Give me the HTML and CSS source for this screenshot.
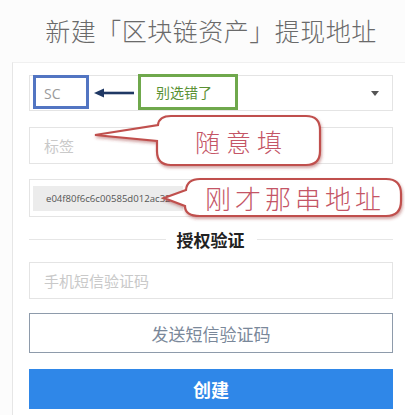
FILE: index.html
```html
<!DOCTYPE html>
<html lang="zh-CN">
<head>
<meta charset="utf-8">
<title>新建提现地址</title>
<link rel="stylesheet" href="styles.css">
</head>
<body>
<div class="page">
  <h1 class="title">新建「区块链资产」提现地址</h1>
  <div class="card">
    <div class="field select">
      <span class="select-value">SC</span>
      <span class="caret"></span>
    </div>
    <div class="field field-label"><span class="ph">标签</span></div>
    <div class="field addr"><span class="addr-chip">e04f80f6c6c00585d012ac32</span></div>
    <div class="divider"><span class="divider-text">授权验证</span></div>
    <div class="field field-sms"><span class="ph">手机短信验证码</span></div>
    <button class="btn-outline">发送短信验证码</button>
    <button class="btn-primary">创建</button>
  </div>

  <div class="mark-blue"></div>
  <svg class="arrow" width="42" height="12" viewBox="0 0 42 12">
    <line x1="9" y1="6" x2="41" y2="6" stroke="#1f3864" stroke-width="2.6"/>
    <polygon points="1,6 11,1.5 11,10.5" fill="#1f3864"/>
  </svg>
  <div class="mark-green">别选错了</div>

  <svg class="bubbles" width="405" height="415" viewBox="0 0 405 415">
    <defs>
      <filter id="sh" x="-10%" y="-20%" width="120%" height="150%">
        <feDropShadow dx="1" dy="2" stdDeviation="1.4" flood-color="#9a3535" flood-opacity="0.45"/>
      </filter>
    </defs>
    <path d="M171,116 H306 Q320,116 320,130 V151 Q320,165 306,165 H171 Q157,165 157,151 V141 L95,135 L158,125 Q159,116 171,116 Z"
          fill="#fff" stroke="#c0504d" stroke-width="2.2" filter="url(#sh)"/>
    <path d="M200,179 H386 Q401,179 401,194 V201 Q401,216 386,216 H200 Q185,216 185,206 L164,198 L186,190 Q187,179 200,179 Z"
          fill="#fff" stroke="#c0504d" stroke-width="2.2" filter="url(#sh)"/>
  </svg>
  <div class="bubble-text b1">随意填</div>
  <div class="bubble-text b2">刚才那串地址</div>
</div>
</body>
</html>
```

FILE: styles.css
```css
* { box-sizing: border-box; }
html, body { margin: 0; padding: 0; }
body {
  background: #fcfcfc;
  font-family: "Noto Sans CJK SC", "Noto Sans", sans-serif;
}
.page {
  position: relative;
  width: 405px;
  height: 415px;
  overflow: hidden;
}
.title {
  margin: 0;
  height: 62px;
  padding: 14px 0 0 17px;
  text-align: center;
  font-size: 25px;
  line-height: 32px;
  font-weight: 300;
  letter-spacing: 0.5px;
  color: #6a6a6a;
  white-space: nowrap;
}
.card {
  margin-left: 12px;
  background: #fff;
  border-left: 1px solid #e6e6e6;
  border-top: 1px solid #f0f0f0;
  padding: 12px 12px 0 16px;
  display: flex;
  flex-direction: column;
  height: 353px;
}
.field {
  height: 37px;
  border: 1px solid #e4e4e4;
  background: #fff;
  display: flex;
  align-items: center;
  padding-left: 14px;
  flex-shrink: 0;
}
.select {
  height: 36px;
  justify-content: space-between;
  padding-right: 13px;
}
.select-value {
  font-family: "Open Sans", sans-serif;
  font-size: 14px;
  color: #9a9a9a;
}
.caret {
  width: 0;
  height: 0;
  border-left: 4px solid transparent;
  border-right: 4px solid transparent;
  border-top: 5px solid #555;
}
.field-label { margin-top: 16px; }
.addr {
  margin-top: 15px;
  height: 38px;
  padding-left: 3px;
}
.addr-chip {
  display: flex;
  align-items: center;
  height: 25px;
  width: 150px;
  background: #ececec;
  padding-left: 13px;
  font-family: "Open Sans", sans-serif;
  font-size: 9.6px;
  color: #555;
  white-space: nowrap;
  overflow: hidden;
}
.ph {
  font-size: 15px;
  color: #c9c9c9;
}
.divider {
  height: 45px;
  display: flex;
  align-items: center;
  flex-shrink: 0;
}
.divider::before,
.divider::after {
  content: "";
  flex: 1;
  height: 1px;
  background: #e6e6e6;
}
.divider-text {
  margin: 0 12px 0 11px;
  font-size: 17px;
  font-weight: 700;
  color: #222;
  line-height: 20px;
}
.btn-outline,
.btn-primary {
  display: block;
  width: 100%;
  height: 40px;
  padding: 0;
  font-family: "Noto Sans CJK SC", "Noto Sans", sans-serif;
  flex-shrink: 0;
}
.btn-outline {
  margin-top: 14px;
  background: #fff;
  border: 1.5px solid #8e9bab;
  font-size: 17px;
  color: #7a889a;
}
.btn-primary {
  margin-top: 16px;
  background: #2f87e8;
  border: 0;
  color: #fff;
  font-size: 18px;
  font-weight: 700;
}
.mark-blue {
  position: absolute;
  left: 33px;
  top: 75px;
  width: 56px;
  height: 34px;
  border: 3px solid #5275c2;
}
.arrow {
  position: absolute;
  left: 93px;
  top: 87px;
}
.mark-green {
  position: absolute;
  left: 138px;
  top: 74px;
  width: 100px;
  height: 36px;
  border: 3px solid #6fa84c;
  background: #fff;
  padding-left: 15px;
  display: flex;
  align-items: center;
  font-size: 14px;
  color: #5a9134;
}
.bubbles {
  position: absolute;
  left: 0;
  top: 0;
  pointer-events: none;
}
.bubble-text {
  position: absolute;
  display: flex;
  align-items: center;
  justify-content: center;
  color: #c45566;
  font-weight: 300;
  white-space: nowrap;
}
.b1 {
  left: 157px;
  top: 116px;
  width: 163px;
  height: 49px;
  font-size: 25px;
  letter-spacing: 6px;
  padding-left: 6px;
}
.b2 {
  left: 185px;
  top: 179px;
  width: 216px;
  height: 37px;
  font-size: 26px;
  letter-spacing: 4px;
  padding-left: 4px;
}
```
